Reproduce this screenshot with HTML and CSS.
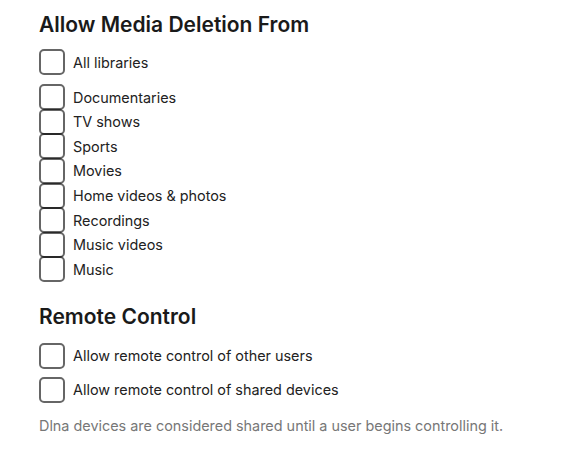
FILE: index.html
```html
<!DOCTYPE html>
<html>
<head>
<meta charset="utf-8">
<link rel="stylesheet" href="styles.css">
</head>
<body>
<div class="page">
  <h2 class="heading">Allow Media Deletion From</h2>
  <label class="row single"><span class="box"></span><span class="label">All libraries</span></label>
  <div class="list">
    <label class="row"><span class="box"></span><span class="label">Documentaries</span></label>
    <label class="row"><span class="box"></span><span class="label">TV shows</span></label>
    <label class="row"><span class="box"></span><span class="label">Sports</span></label>
    <label class="row"><span class="box"></span><span class="label">Movies</span></label>
    <label class="row"><span class="box"></span><span class="label">Home videos &amp; photos</span></label>
    <label class="row"><span class="box"></span><span class="label">Recordings</span></label>
    <label class="row"><span class="box"></span><span class="label">Music videos</span></label>
    <label class="row"><span class="box"></span><span class="label">Music</span></label>
  </div>
  <h2 class="heading second">Remote Control</h2>
  <div class="remote">
    <label class="row single"><span class="box"></span><span class="label">Allow remote control of other users</span></label>
    <label class="row single"><span class="box"></span><span class="label">Allow remote control of shared devices</span></label>
  </div>
  <p class="note">Dlna devices are considered shared until a user begins controlling it.</p>
</div>
</body>
</html>
```
FILE: styles.css
```css
html, body {
  margin: 0;
  padding: 0;
  background: #ffffff;
}
body {
  font-family: Inter, "Noto Sans", sans-serif;
  color: #1f1f1f;
}
.page {
  padding: 12px 0 0 39px;
}
.heading {
  margin: 0;
  font-size: 21px;
  line-height: 26px;
  font-weight: 600;
  color: #1a1a1a;
}
.heading.second {
  margin-top: 22px;
}
.row {
  display: flex;
  align-items: center;
  gap: 8px;
  font-size: 14.4px;
  color: #222;
}
.row.single {
  height: 26px;
}
.heading + .row.single {
  margin-top: 11px;
}
.box {
  box-sizing: border-box;
  width: 26px;
  height: 26px;
  flex: none;
  border: 2px solid rgba(0, 0, 0, 0.6);
  border-radius: 5px;
}
.list {
  margin-top: 10px;
  display: flex;
  flex-direction: column;
}
.list .row {
  height: 24.57px;
}
.remote {
  margin-top: 13px;
  display: flex;
  flex-direction: column;
  gap: 8px;
}
.note {
  margin: 14px 0 0;
  font-size: 14.4px;
  color: #777;
}
```
